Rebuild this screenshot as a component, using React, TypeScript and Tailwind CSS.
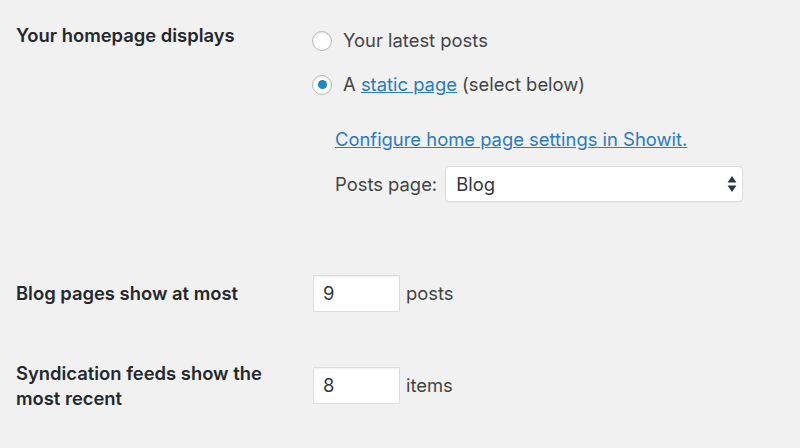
const Radio = ({ checked }: { checked?: boolean }) => (
  <span className="flex h-5 w-5 shrink-0 items-center justify-center rounded-full border border-[#b4b9be] bg-white shadow-[inset_0_1px_2px_rgba(0,0,0,0.1)]">
    {checked && <span className="h-[9px] w-[9px] rounded-full bg-[#2585c5]" />}
  </span>
)

const NumberField = ({ value, unit }: { value: string; unit: string }) => (
  <div className="flex items-center gap-[6px]">
    <div className="flex h-[37px] w-[87px] items-center border border-[#dddddd] bg-white pl-[9px] text-[#32373c] shadow-[inset_0_1px_2px_rgba(0,0,0,0.07)]">
      {value}
    </div>
    <span>{unit}</span>
  </div>
)

export default function App() {
  return (
    <div className="h-[448px] w-[800px] overflow-hidden bg-[#f1f1f1] font-['Inter',sans-serif] text-[18.4px] leading-[25px] text-[#444444]">
      {/* homepage displays */}
      <div className="flex">
        <div className="w-[312px] shrink-0 pl-4 pt-[23px] font-semibold text-[#23282d]">Your homepage displays</div>
        <div className="flex flex-col pt-[28px]">
          <label className="flex items-center gap-[11px]">
            <Radio />
            <span>Your latest posts</span>
          </label>
          <label className="mt-[19px] flex items-center gap-[11px]">
            <Radio checked />
            <span>
              A <a className="text-[#2a7bbf] underline">static page</a> (select below)
            </span>
          </label>
          <div className="mt-[30px] pl-[23px]">
            <a className="text-[#2a7bbf] underline">Configure home page settings in Showit.</a>
            <div className="mt-[14px] flex items-center gap-2">
              <span>Posts page:</span>
              <div className="relative flex h-9 w-[298px] items-center rounded border border-[#dddddd] bg-white pl-[10px] text-[#32373c] shadow-[0_1px_1px_rgba(0,0,0,0.04)]">
                Blog
                <svg className="absolute right-[5px] top-[8px]" width="10" height="18" viewBox="0 0 10 18">
                  <path d="M5 1 L9.5 7.5 H0.5 Z M5 17 L9.5 10.5 H0.5 Z" fill="#32373c" />
                </svg>
              </div>
            </div>
          </div>
        </div>
      </div>

      {/* blog pages */}
      <div className="mt-[73px] flex items-center">
        <div className="w-[313px] shrink-0 pl-4 font-semibold text-[#23282d]">Blog pages show at most</div>
        <NumberField value="9" unit="posts" />
      </div>

      {/* syndication */}
      <div className="mt-[47px] flex items-center">
        <div className="w-[313px] shrink-0 pl-4 pr-10 pt-[2px] font-semibold text-[#23282d]">
          Syndication feeds show the most recent
        </div>
        <NumberField value="8" unit="items" />
      </div>
    </div>
  )
}
